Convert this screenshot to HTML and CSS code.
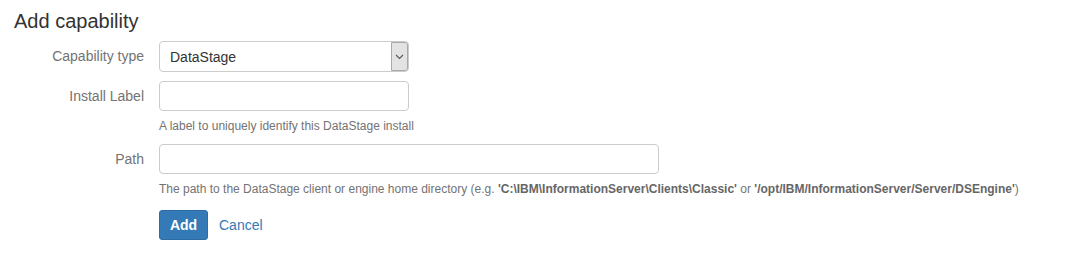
FILE: index.html
```html
<!DOCTYPE html>
<html>
<head>
<meta charset="utf-8">
<title>Add capability</title>
<link rel="stylesheet" href="styles.css">
</head>
<body>
<div class="page">
  <h2 class="title">Add capability</h2>
  <form class="form">
    <div class="group">
      <label class="label" for="type">Capability type</label>
      <div class="control">
        <div class="select-wrap">
          <select id="type" class="select">
            <option>DataStage</option>
          </select>
          <span class="select-arrow">
            <svg width="9" height="6" viewBox="0 0 9 6"><path d="M1 1 L4.5 4.5 L8 1" fill="none" stroke="#5a5a5a" stroke-width="1.2"/></svg>
          </span>
        </div>
      </div>
    </div>
    <div class="group">
      <label class="label" for="lbl">Install Label</label>
      <div class="control">
        <input id="lbl" class="input input-short" type="text">
        <p class="help">A label to uniquely identify this DataStage install</p>
      </div>
    </div>
    <div class="group">
      <label class="label" for="path">Path</label>
      <div class="control">
        <input id="path" class="input input-long" type="text">
        <p class="help">The path to the DataStage client or engine home directory (e.g. <b>'C:\IBM\InformationServer\Clients\Classic'</b> or <b>'/opt/IBM/InformationServer/Server/DSEngine'</b>)</p>
      </div>
    </div>
    <div class="group actions">
      <div class="spacer"></div>
      <div class="control buttons">
        <button type="button" class="btn-primary">Add</button>
        <a class="cancel" href="#">Cancel</a>
      </div>
    </div>
  </form>
</div>
</body>
</html>
```
FILE: styles.css
```css
* { box-sizing: border-box; }
html, body { margin: 0; padding: 0; background: #fff; }
body {
  font-family: "Liberation Sans", Arial, sans-serif;
  font-size: 14px;
  color: #333;
}
.page { padding: 10px 0 0 14px; }
.title {
  margin: 0 0 9px 0;
  font-size: 20px;
  font-weight: normal;
  line-height: 22px;
  color: #333;
}
.form { display: flex; flex-direction: column; }
.group {
  display: grid;
  grid-template-columns: 130px 1fr;
  column-gap: 15px;
  margin-bottom: 9px;
}
.label {
  text-align: right;
  color: #737373;
  line-height: 30px;
  font-size: 14px;
}
.control { display: flex; flex-direction: column; align-items: flex-start; }
.select-wrap { position: relative; width: 250px; height: 31px; }
.select {
  appearance: none;
  -webkit-appearance: none;
  width: 100%;
  height: 31px;
  border: 1px solid #ccc;
  border-radius: 4px;
  background: #fff;
  padding: 0 0 0 10px;
  font-family: inherit;
  font-size: 14px;
  color: #333;
}
.select-arrow {
  position: absolute;
  top: 1px;
  right: 1px;
  width: 17px;
  height: 29px;
  background: #e3e3e3;
  border: 1px solid #a9a9a9;
  border-radius: 0 3px 3px 0;
  display: flex;
  align-items: center;
  justify-content: center;
  pointer-events: none;
}
.input {
  height: 30px;
  border: 1px solid #ccc;
  border-radius: 4px;
  padding: 0 10px;
  font-family: inherit;
  font-size: 14px;
}
.input-short { width: 250px; }
.input-long { width: 500px; }
.help {
  margin: 7px 0 0 0;
  font-size: 12px;
  line-height: 17px;
  color: #737373;
}
.help b { color: #666; }
.actions { margin-top: 3px; }
.buttons { flex-direction: row; align-items: center; gap: 11px; }
.btn-primary {
  height: 30px;
  width: 49px;
  padding: 0;
  border: 1px solid #2e6da4;
  border-radius: 3px;
  background: #337ab7;
  color: #fff;
  font-family: inherit;
  font-weight: bold;
  font-size: 14px;
}
.cancel {
  color: #337ab7;
  text-decoration: none;
  font-size: 14px;
}
```
